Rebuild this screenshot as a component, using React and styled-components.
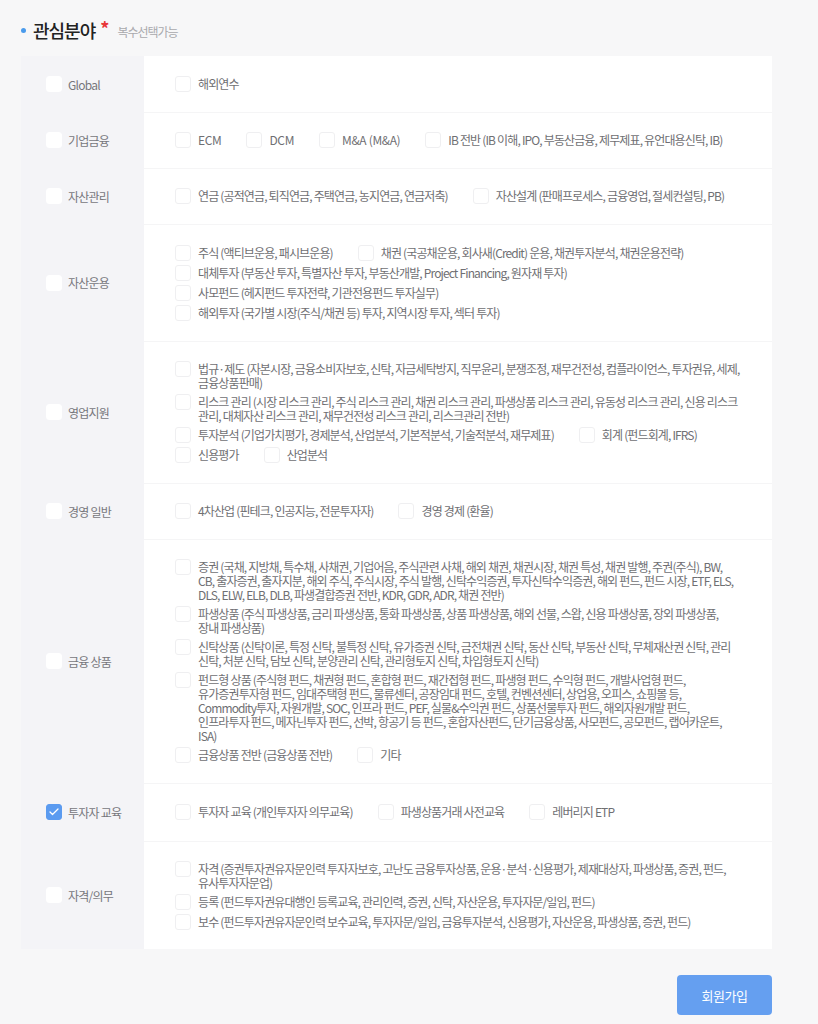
import React from 'react'
import styled, { createGlobalStyle } from 'styled-components'
import { Check } from 'lucide-react'

const GlobalStyle = createGlobalStyle`
  html, body {
    margin: 0;
    background: #f7f7f8;
    font-family: "Noto Sans CJK KR", "Noto Sans", sans-serif;
  }
`

const Page = styled.main`
  width: 818px;
  height: 1024px;
  box-sizing: border-box;
  padding: 0 46px 0 21px;
  overflow: hidden;
`

const Header = styled.header`
  height: 56px;
  display: flex;
  align-items: center;
  padding-top: 4px;
  box-sizing: border-box;
`

const Dot = styled.span`
  width: 5px;
  height: 5px;
  border-radius: 50%;
  background: #4a9bec;
  margin-right: 7px;
`

const Title = styled.h2`
  margin: 0;
  font-size: 18px;
  font-weight: 500;
  letter-spacing: -1px;
  color: #222;
`

const Star = styled.span`
  color: #e8363a;
  margin-left: 5px;
  font-size: 18px;
  font-weight: 700;
  margin-top: -4px;
`

const Hint = styled.span`
  margin-left: 8px;
  font-size: 12px;
  letter-spacing: -1px;
  color: #a9a9ad;
  padding-top: 2px;
`

const Table = styled.section`
  display: flex;
  flex-direction: column;
`

const Row = styled.div`
  display: grid;
  grid-template-columns: 123px 1fr;
  min-height: ${(p) => p.$height}px;
`

const Side = styled.label`
  display: flex;
  align-items: center;
  gap: 6px;
  padding-left: 25px;
  background: #f4f4f7;
  font-size: 12px;
  letter-spacing: -0.75px;
  color: #77777c;
`

const Body = styled.div`
  display: flex;
  flex-wrap: wrap;
  align-content: center;
  column-gap: 25px;
  row-gap: 4px;
  box-sizing: border-box;
  padding: 0 30px 1px 31px;
  background: #fff;
  border-top: ${(p) => (p.$first ? 'none' : '1px solid #f5f5f6')};
`

const Item = styled.label`
  display: flex;
  align-items: flex-start;
  gap: 7px;
  max-width: 100%;
  font-size: 12px;
  line-height: 14px;
  letter-spacing: ${(p) => (p.$latin ? '-0.35px' : '-0.88px')};
  word-spacing: 0.2px;
  word-break: keep-all;
  white-space: pre-line;
  color: #6f6f73;
`

const ItemText = styled.span`
  flex: 1;
  padding-top: 1px;
`

const Box = styled.span`
  flex: none;
  width: 16px;
  height: 16px;
  box-sizing: border-box;
  display: flex;
  align-items: center;
  justify-content: center;
  border-radius: 3px;
  background: ${(p) => (p.$checked ? '#5b9bf0' : '#fff')};
  border: 1px solid ${(p) => (p.$checked ? '#5b9bf0' : p.$plain ? '#fff' : '#efeff1')};
  color: #fff;
`

const Footer = styled.div`
  display: flex;
  justify-content: flex-end;
  padding-top: 26px;
`

const JoinButton = styled.button`
  width: 95px;
  height: 40px;
  border: none;
  border-radius: 4px;
  background: #659ff0;
  color: #fff;
  font-family: inherit;
  font-size: 13px;
  letter-spacing: -0.5px;
`

const sections = [
  { label: 'Global', height: 56, items: ['해외연수'] },
  { label: '기업금융', height: 56, items: ['ECM', 'DCM', 'M&A (M&A)', 'IB 전반 (IB 이해, IPO, 부동산금융, 제무제표, 유언대용신탁, IB)'] },
  { label: '자산관리', height: 56, items: ['연금 (공적연금, 퇴직연금, 주택연금, 농지연금, 연금저축)', '자산설계 (판매프로세스, 금융영업, 절세컨설팅, PB)'] },
  {
    label: '자산운용',
    height: 117,
    items: [
      '주식 (액티브운용, 패시브운용)',
      '채권 (국공채운용, 회사새(Credit) 운용, 채권투자분석, 채권운용전략)',
      '대체투자 (부동산 투자, 특별자산 투자, 부동산개발, Project Financing, 원자재 투자)',
      '사모펀드 (헤지펀드 투자전략, 기관전용펀드 투자실무)',
      '해외투자 (국가별 시장(주식/채권 등) 투자, 지역시장 투자, 섹터 투자)',
    ],
  },
  {
    label: '영업지원',
    height: 142,
    items: [
      '법규·제도 (자본시장, 금융소비자보호, 신탁, 자금세탁방지, 직무윤리, 분쟁조정, 재무건전성, 컴플라이언스, 투자권유, 세제,\n금융상품판매)',
      '리스크 관리 (시장 리스크 관리, 주식 리스크 관리, 채권 리스크 관리, 파생상품 리스크 관리, 유동성 리스크 관리, 신용 리스크\n관리, 대체자산 리스크 관리, 재무건전성 리스크 관리, 리스크관리 전반)',
      '투자분석 (기업가치평가, 경제분석, 산업분석, 기본적분석, 기술적분석, 재무제표)',
      '회계 (펀드회계, IFRS)',
      '신용평가',
      '산업분석',
    ],
  },
  { label: '경영 일반', height: 56, items: ['4차산업 (핀테크, 인공지능, 전문투자자)', '경영 경제 (환율)'] },
  {
    label: '금융 상품',
    height: 244,
    items: [
      '증권 (국채, 지방채, 특수채, 사채권, 기업어음, 주식관련 사채, 해외 채권, 채권시장, 채권 특성, 채권 발행, 주권(주식), BW,\nCB, 출자증권, 출자지분, 해외 주식, 주식시장, 주식 발행, 신탁수익증권, 투자신탁수익증권, 해외 펀드, 펀드 시장, ETF, ELS,\nDLS, ELW, ELB, DLB, 파생결합증권 전반, KDR, GDR, ADR, 채권 전반)',
      '파생상품 (주식 파생상품, 금리 파생상품, 통화 파생상품, 상품 파생상품, 해외 선물, 스왑, 신용 파생상품, 장외 파생상품,\n장내 파생상품)',
      '신탁상품 (신탁이론, 특정 신탁, 불특정 신탁, 유가증권 신탁, 금전채권 신탁, 동산 신탁, 부동산 신탁, 무체재산권 신탁, 관리\n신탁, 처분 신탁, 담보 신탁, 분양관리 신탁, 관리형토지 신탁, 차입형토지 신탁)',
      '펀드형 상품 (주식형 펀드, 채권형 펀드, 혼합형 펀드, 재간접형 펀드, 파생형 펀드, 수익형 펀드, 개발사업형 펀드,\n유가증권투자형 펀드, 임대주택형 펀드, 물류센터, 공장임대 펀드, 호텔, 컨벤션센터, 상업용, 오피스, 쇼핑몰 등,\nCommodity투자, 자원개발, SOC, 인프라 펀드, PEF, 실물&수익권 펀드, 상품선물투자 펀드, 해외자원개발 펀드,\n인프라투자 펀드, 메자닌투자 펀드, 선박, 항공기 등 펀드, 혼합자산펀드, 단기금융상품, 사모펀드, 공모펀드, 랩어카운트,\nISA)',
      '금융상품 전반 (금융상품 전반)',
      '기타',
    ],
  },
  { label: '투자자 교육', height: 58, checked: true, items: ['투자자 교육 (개인투자자 의무교육)', '파생상품거래 사전교육', '레버리지 ETP'] },
  {
    label: '자격/의무',
    height: 108,
    items: [
      '자격 (증권투자권유자문인력 투자자보호, 고난도 금융투자상품, 운용·분석·신용평가, 제재대상자, 파생상품, 증권, 펀드,\n유사투자자문업)',
      '등록 (펀드투자권유대행인 등록교육, 관리인력, 증권, 신탁, 자산운용, 투자자문/일임, 펀드)',
      '보수 (펀드투자권유자문인력 보수교육, 투자자문/일임, 금융투자분석, 신용평가, 자산운용, 파생상품, 증권, 펀드)',
    ],
  },
]

const isLatin = (text) => /^[A-Z&() ]+$/.test(text)

export default function App() {
  return (
    <Page>
      <GlobalStyle />
      <Header>
        <Dot />
        <Title>관심분야</Title>
        <Star>*</Star>
        <Hint>복수선택가능</Hint>
      </Header>
      <Table>
        {sections.map((section, i) => (
          <Row key={section.label} $height={section.height}>
            <Side>
              <Box $plain $checked={section.checked}>
                {section.checked && <Check size={12} strokeWidth={2.5} />}
              </Box>
              {section.label}
            </Side>
            <Body $first={i === 0}>
              {section.items.map((item) => (
                <Item key={item} $latin={isLatin(item)}>
                  <Box />
                  <ItemText>{item}</ItemText>
                </Item>
              ))}
            </Body>
          </Row>
        ))}
      </Table>
      <Footer>
        <JoinButton>회원가입</JoinButton>
      </Footer>
    </Page>
  )
}
